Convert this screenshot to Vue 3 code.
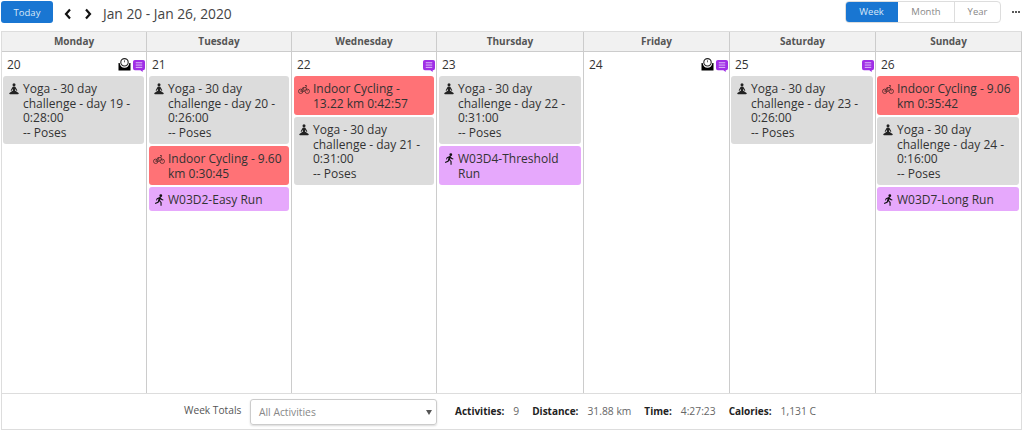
<script setup>
const days = [
  { name: 'Monday', num: 20, weight: true, note: true, items: [
    { type: 'yoga', text: ['Yoga - 30 day challenge - day 19 - 0:28:00', '-- Poses'] }
  ] },
  { name: 'Tuesday', num: 21, items: [
    { type: 'yoga', text: ['Yoga - 30 day challenge - day 20 - 0:26:00', '-- Poses'] },
    { type: 'bike', text: ['Indoor Cycling - 9.60 km 0:30:45'] },
    { type: 'run', text: ['W03D2-Easy Run'] }
  ] },
  { name: 'Wednesday', num: 22, note: true, items: [
    { type: 'bike', text: ['Indoor Cycling - 13.22 km 0:42:57'] },
    { type: 'yoga', text: ['Yoga - 30 day challenge - day 21 - 0:31:00', '-- Poses'] }
  ] },
  { name: 'Thursday', num: 23, items: [
    { type: 'yoga', text: ['Yoga - 30 day challenge - day 22 - 0:31:00', '-- Poses'] },
    { type: 'run', text: ['W03D4-Threshold Run'] }
  ] },
  { name: 'Friday', num: 24, weight: true, note: true, items: [] },
  { name: 'Saturday', num: 25, note: true, items: [
    { type: 'yoga', text: ['Yoga - 30 day challenge - day 23 - 0:26:00', '-- Poses'] }
  ] },
  { name: 'Sunday', num: 26, items: [
    { type: 'bike', text: ['Indoor Cycling - 9.06 km 0:35:42'] },
    { type: 'yoga', text: ['Yoga - 30 day challenge - day 24 - 0:16:00', '-- Poses'] },
    { type: 'run', text: ['W03D7-Long Run'] }
  ] }
]

const totals = [
  { label: 'Activities:', value: '9' },
  { label: 'Distance:', value: '31.88 km' },
  { label: 'Time:', value: '4:27:23' },
  { label: 'Calories:', value: '1,131 C' }
]
</script>

<template>
  <div class="page">
    <header class="toolbar">
      <button class="today">Today</button>
      <svg class="arrow first" width="10" height="12" viewBox="0 0 10 12"><path d="M7 1.5 3 6l4 4.5" /></svg>
      <svg class="arrow" width="10" height="12" viewBox="0 0 10 12"><path d="M3 1.5 7 6l-4 4.5" /></svg>
      <span class="range">Jan 20 - Jan 26, 2020</span>
      <div class="views">
        <span class="view active">Week</span>
        <span class="view month">Month</span>
        <span class="view year">Year</span>
      </div>
      <span class="more"><i></i><i></i><i></i></span>
    </header>

    <div class="calendar">
      <div v-for="day in days" :key="day.name" class="head">{{ day.name }}</div>
      <div v-for="day in days" :key="day.num" class="day">
        <div class="day-top">
          <span class="num">{{ day.num }}</span>
          <svg v-if="day.weight" class="scale" width="13" height="13" viewBox="0 0 13 13">
            <path d="M.5 5h1.200a4.800 4.800 0 0 0 9.600 0h1.200v7.500H.5z" fill="#000" />
            <circle cx="6.500" cy="4.300" r="3.700" fill="#fff" stroke="#222" stroke-width="1.100" />
            <path d="M6.500 4.300V2.300" stroke="#555" stroke-width=".9" />
          </svg>
          <svg v-if="day.note" class="note" width="12" height="12" viewBox="0 0 13 13">
            <path d="M2 0h9a2 2 0 0 1 2 2v7a2 2 0 0 1-2 2h-.5v2L8 11H2a2 2 0 0 1-2-2V2a2 2 0 0 1 2-2z" fill="#a02fe6" />
            <path d="M3 3h7M3 5.500h7M3 8h7" stroke="#e4c8fa" stroke-width="1" />
          </svg>
        </div>
        <div v-for="(item, i) in day.items" :key="i" class="item" :class="item.type">
          <svg v-if="item.type === 'yoga'" class="ico" width="12" height="12" viewBox="0 0 12 12">
            <circle cx="6" cy="1.800" r="1.500" fill="#222" />
            <path d="M6 3.400c-1 0-1.600.5-1.900 1.400L2.600 7.400l1 .4L5 5.800v1.800L1.400 10c-.4.5 0 1.200.6 1.200h8c.6 0 1-.7.6-1.200L7 7.600V5.800l1.400 2 1-.4-1.500-2.600C7.600 3.900 7 3.400 6 3.400z" fill="#222" />
          </svg>
          <svg v-else-if="item.type === 'bike'" class="ico" width="12" height="12" viewBox="0 0 12 12" fill="none" stroke="#4a2a2a" stroke-width=".8">
            <circle cx="2.700" cy="8.300" r="2.200" />
            <circle cx="9.300" cy="8.300" r="2.200" />
            <path d="M2.700 8.300 5 4.600h3l1.300 3.700M5 4.600l1.500 3.700h-3.800M7 2.500h1.500L8 4.600" />
          </svg>
          <svg v-else class="ico" width="12" height="12" viewBox="0 0 12 12">
            <circle cx="7.800" cy="1.700" r="1.400" fill="#111" />
            <path d="M6.200 3.300 3.800 4.200 3 6.300l.9.300.6-1.500 1.100-.4-.9 3-2.800 1.400.4 1 3.200-1.400.7-1.400 1.300 1.300v3.100h1.100V8.200L7.100 6.700l.5-1.800.7 1 1.900.5.200-.9-1.500-.5-1.100-1.500c-.5-.6-1-.5-1.600-.2z" fill="#111" />
          </svg>
          <div class="item-text">
            <div v-for="line in item.text" :key="line">{{ line }}</div>
          </div>
        </div>
      </div>
    </div>

    <footer class="totals">
      <span class="totals-title">Week Totals</span>
      <div class="select">All Activities<span class="caret"></span></div>
      <div v-for="t in totals" :key="t.label" class="stat">
        <b>{{ t.label }}</b><span>{{ t.value }}</span>
      </div>
    </footer>
  </div>
</template>

<style>
html, body {
  margin: 0;
  background: #fff;
}
</style>

<style scoped>
.page {
  width: 1024px;
  height: 433px;
  display: flex;
  flex-direction: column;
  font-family: "Open Sans", sans-serif;
  font-size: 12px;
  color: #333;
  box-sizing: border-box;
  padding: 1px 2px 3px 1px;
}

.toolbar {
  height: 30px;
  flex: none;
  display: flex;
  align-items: flex-start;
}

.today {
  width: 52px;
  height: 22px;
  border: none;
  border-radius: 3px;
  background: #1976d2;
  color: #d8e8f8;
  font-family: inherit;
  font-size: 9.500px;
  padding: 0;
}

.arrow {
  margin-top: 7px;
  margin-left: 10px;
  fill: none;
  stroke: #111;
  stroke-width: 2.200;
}

.range {
  margin-left: 10px;
  font-size: 13.800px;
  line-height: 26px;
  color: #444;
}

.views {
  margin-left: auto;
  display: flex;
  height: 22px;
  box-sizing: border-box;
  border: 1px solid #ddd;
  border-radius: 4px;
  font-size: 9.500px;
  line-height: 20px;
  text-align: center;
  color: #888;
  overflow: hidden;
}

.view {
  width: 56px;
  border-left: 1px solid #ddd;
}

.view.active {
  width: 53px;
  margin: -1px 0 -1px -1px;
  border: none;
  line-height: 22px;
  background: #1976d2;
  color: #d8e8f8;
}

.view.month {
  border-left: none;
}

.view.year {
  width: 45px;
}

.more {
  width: 21px;
  display: flex;
  justify-content: flex-end;
  gap: 1px;
  padding: 10px 2px 0 0;
  box-sizing: border-box;
}

.more i {
  width: 2px;
  height: 2px;
  border-radius: 50%;
  background: #222;
}

.calendar {
  flex: 1;
  min-height: 0;
  display: grid;
  grid-template-columns: 145px 145px 145px 147px 146px 146px 146px;
  grid-template-rows: 20px 1fr;
  border: 1px solid #ddd;
  border-bottom: none;
  border-right: none;
}

.head {
  background: #f1f1f1;
  border-right: 1px solid #ccc;
  border-bottom: 1px solid #ccc;
  text-align: center;
  font-size: 10px;
  font-weight: 700;
  line-height: 19px;
  color: #555;
}

.day {
  border-right: 1px solid #ccc;
  padding: 0 2px 0 1px;
  min-width: 0;
}

/* tue - thu cards sit a pixel further in */
.day:nth-child(n+9):nth-child(-n+11) .item {
  margin-left: 1px;
  padding-left: 4px;
}

.day-top {
  height: 24px;
  display: flex;
  align-items: flex-start;
  padding: 4px 0 0 4px;
  margin-right: -1px;
  box-sizing: border-box;
  gap: 2px;
}

.num {
  margin-right: auto;
  margin-top: 1px;
  line-height: 15px;
  color: #333;
}

.scale {
  margin-top: 2px;
}

.note {
  margin-top: 4px;
}

.item {
  display: flex;
  gap: 3px;
  padding: 6px 5px 3.500px 5px;
  margin-bottom: 2px;
  border-radius: 3px;
  line-height: 14.670px;
  color: #333;
}

.ico {
  flex: none;
  margin-top: 1px;
}

.item-text {
  min-width: 0;
}

.yoga {
  background: #dcdcdc;
}

.bike {
  background: #ff7276;
}

.run {
  background: #e6a8fc;
}

.totals {
  height: 37px;
  flex: none;
  display: flex;
  align-items: center;
  box-sizing: border-box;
  border: 1px solid #ddd;
  font-size: 10px;
  color: #555;
  padding-left: 182px;
}

.totals-title {
  width: 66px;
  color: #555;
  margin-top: -3px;
  font-size: 10.200px;
}

.select {
  position: relative;
  width: 187px;
  height: 26px;
  line-height: 25px;
  box-sizing: border-box;
  border: 1px solid #ccc;
  border-radius: 3px;
  box-shadow: 0 1px 2px rgba(0, 0, 0, 0.15);
  padding-left: 8px;
  color: #888;
  font-size: 10.300px;
  margin-right: 18px;
}

.caret {
  position: absolute;
  right: 4px;
  top: 10px;
  border: 3px solid transparent;
  border-top: 5px solid #555;
  border-bottom: none;
}

.stat {
  display: flex;
  gap: 9px;
  margin-right: 13px;
  margin-top: -2px;
}

.stat b {
  font-weight: 700;
  color: #222;
}

.stat span {
  color: #666;
  font-size: 10.300px;
}
</style>
